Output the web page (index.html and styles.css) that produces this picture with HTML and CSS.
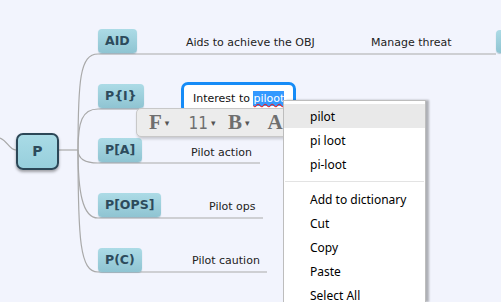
FILE: index.html
```html
<!DOCTYPE html>
<html lang="en">
<head>
    <meta charset="UTF-8">
    <title>Mind map</title>
    <link rel="stylesheet" href="styles.css">
</head>
<body>
    <div class="map">
        <svg class="links" width="501" height="302" viewBox="0 0 501 302">
            <path d="M0,138 C8,141 9,150 16,150" />
            <path d="M59,150 H78" />
            <path d="M78,150 C78,80 80,54 98,54 H496" />
            <path d="M78,150 C78,122 82,109 98,109 H300" />
            <path d="M78,150 C78,158 84,163 98,163 H260" />
            <path d="M78,150 C78,190 82,218 98,218 H263" />
            <path d="M78,150 C78,240 80,272 98,272 H267" />
        </svg>

        <div class="node root">P</div>
        <div class="node topic aid">AID</div>
        <div class="node topic pi">P{I}</div>
        <div class="node topic pa">P[A]</div>
        <div class="node topic pops">P[OPS]</div>
        <div class="node topic pc">P(C)</div>
        <div class="node topic edge"></div>

        <div class="label aids">Aids to achieve the OBJ</div>
        <div class="label threat">Manage threat</div>
        <div class="label action">Pilot action</div>
        <div class="label ops">Pilot ops</div>
        <div class="label caution">Pilot caution</div>

        <div class="editor">Interest to <span class="selected">piloot</span></div>

        <div class="toolbar">
            <span class="tool serif">F<i class="caret">&#9662;</i></span>
            <span class="tool size">11<i class="caret">&#9662;</i></span>
            <span class="tool serif">B<i class="caret">&#9662;</i></span>
            <span class="tool serif">A</span>
        </div>

        <ul class="menu">
            <li class="hover">pilot</li>
            <li>pi loot</li>
            <li>pi-loot</li>
            <li class="sep"></li>
            <li>Add to dictionary</li>
            <li>Cut</li>
            <li>Copy</li>
            <li>Paste</li>
            <li>Select All</li>
        </ul>
    </div>
</body>
</html>
```

FILE: styles.css
```css
body {
    margin: 0;
    background-color: #f2f4fd;
    overflow: hidden;
}

.map {
    position: relative;
    width: 501px;
    height: 302px;
    overflow: hidden;
    font-family: "DejaVu Sans", Verdana, sans-serif;
    font-size: 11px;
    color: #222;
}

.links {
    position: absolute;
    left: 0;
    top: 0;
}

.links path {
    fill: none;
    stroke: #a9a9a9;
    stroke-width: 1.2;
}

/* topics */
.node {
    position: absolute;
    box-sizing: border-box;
    font-weight: bold;
    color: #2d4b5c;
    text-align: center;
}

.topic {
    height: 24px;
    line-height: 24px;
    padding: 0 7px;
    font-size: 12.5px;
    border-radius: 4px;
    background: linear-gradient(#acdbe6, #8fc4d2);
    box-shadow: 0 1px 1px rgba(70, 120, 140, 0.35);
}

.root {
    left: 16px;
    top: 133px;
    width: 43px;
    height: 37px;
    line-height: 33px;
    font-size: 14px;
    border: 2px solid #2c4757;
    border-radius: 7px;
    background: linear-gradient(#a9dbe6, #97cfdc);
    box-shadow: 0 2px 3px rgba(0, 0, 0, 0.35);
}

.aid { left: 98px; top: 29px; }
.pi { left: 98px; top: 84px; }
.pa { left: 98px; top: 138px; }
.pops { left: 98px; top: 193px; }
.pc { left: 98px; top: 248px; }
.edge { left: 496px; top: 30px; width: 5px; height: 23px; padding: 0; border-radius: 4px 0 0 4px; }

/* branch texts */
.label {
    position: absolute;
    line-height: 13px;
    white-space: nowrap;
}

.aids { left: 186px; top: 36px; }
.threat { left: 371px; top: 36px; }
.action { left: 191px; top: 146px; }
.ops { left: 209px; top: 200px; }
.caution { left: 192px; top: 254px; }

/* inline editor */
.editor {
    position: absolute;
    left: 181px;
    top: 82px;
    width: 115px;
    height: 32px;
    box-sizing: border-box;
    padding: 6px 0 0 9px;
    line-height: 13px;
    color: #111;
    background-color: #fff;
    border: 3px solid #168cf7;
    border-radius: 7px;
    white-space: nowrap;
}

.selected {
    display: inline-block;
    padding: 1px 0;
    background-color: #3399ff;
    color: #fff;
    text-decoration: underline wavy #e0222a;
    text-decoration-skip-ink: none;
    text-underline-offset: 1px;
}

/* format toolbar */
.toolbar {
    position: absolute;
    left: 136px;
    top: 108px;
    width: 170px;
    height: 29px;
    box-sizing: border-box;
    padding-left: 12px;
    display: flex;
    align-items: center;
    background-color: #ececec;
    border: 1px solid #c8c8c8;
    border-radius: 5px;
    box-shadow: 1px 2px 3px rgba(0, 0, 0, 0.18);
    color: #6f6f6f;
}

.tool {
    width: 39.5px;
    flex: none;
    display: flex;
    align-items: center;
    white-space: nowrap;
}

.serif {
    font-family: "Liberation Serif", "Times New Roman", serif;
    font-size: 21px;
    font-weight: bold;
}

.size {
    font-family: "DejaVu Sans Condensed", "DejaVu Sans", Tahoma, sans-serif;
    font-size: 17px;
}

.caret {
    font-style: normal;
    font-weight: normal;
    font-family: "DejaVu Sans", sans-serif;
    font-size: 9px;
    margin-left: 3px;
    color: #555;
}

/* spelling context menu */
.menu {
    position: absolute;
    left: 283px;
    top: 100px;
    width: 143px;
    height: 202px;
    box-sizing: border-box;
    margin: 0;
    padding: 3px 0 0;
    list-style: none;
    background-color: #fff;
    border: 1px solid #bdbdbd;
    border-bottom: none;
    box-shadow: 3px 0 2px rgba(0, 0, 0, 0.28);
    font-family: "Noto Sans", "Open Sans", sans-serif;
    font-size: 12px;
    color: #000;
    overflow: hidden;
}

.menu li {
    height: 24px;
    line-height: 25px;
    padding-left: 26px;
}

.menu .hover {
    background-color: #e9e9e9;
}

.menu .sep {
    height: 11px;
    padding: 0;
    margin: 0 1px;
    background: linear-gradient(transparent 5px, #e3e3e3 5px, #e3e3e3 6px, transparent 6px);
}
```
